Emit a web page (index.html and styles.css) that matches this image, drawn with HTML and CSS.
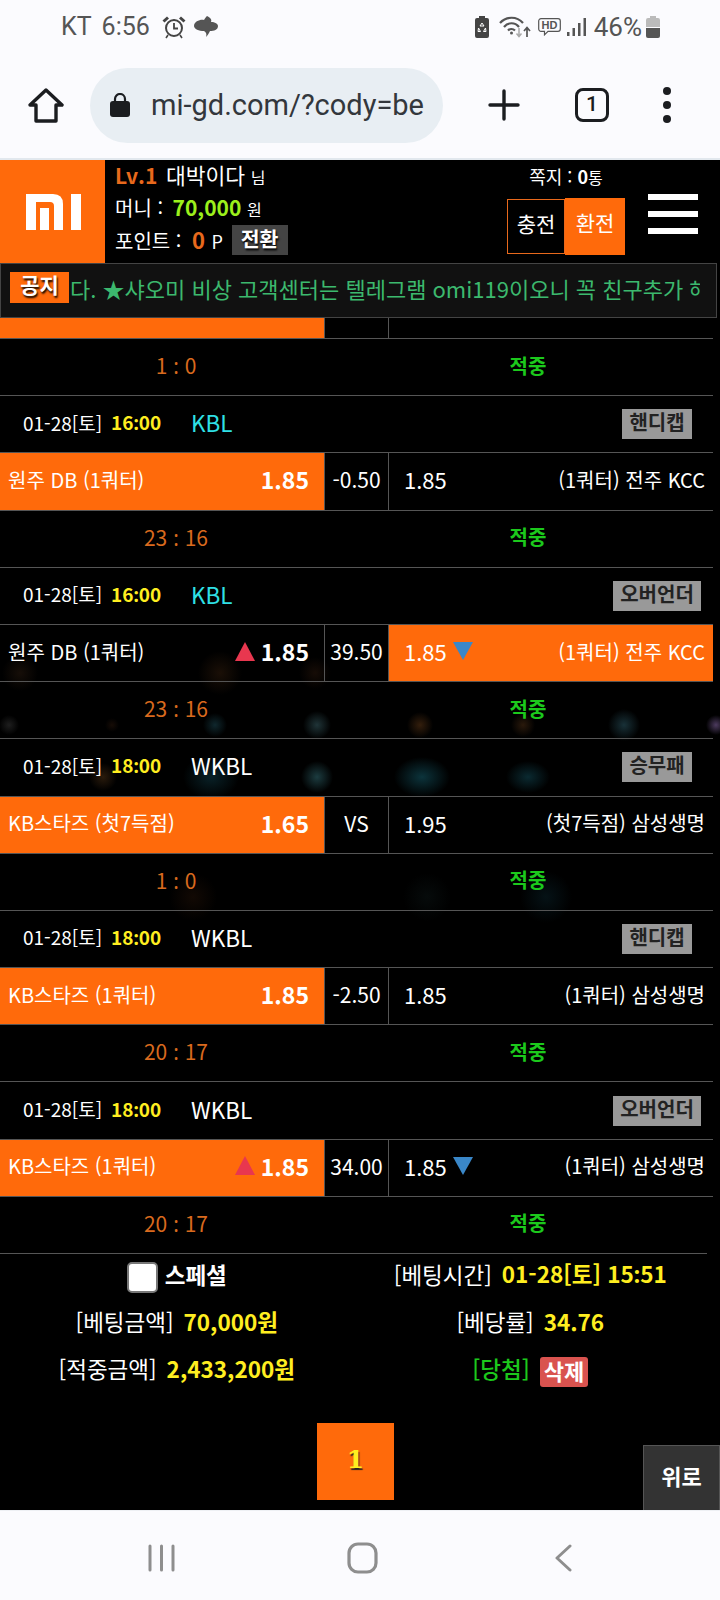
FILE: index.html
```html
<!DOCTYPE html>
<html lang="ko">
<head>
    <meta charset="UTF-8">
    <meta name="viewport" content="width=device-width, initial-scale=1.0">
    <title>mi-gd.com</title>
    <link rel="stylesheet" href="styles.css">
</head>
<body>
    <div class="status">
        <div class="status-left">
            <span class="carrier">KT</span>
            <span class="clock">6:56</span>
            <svg class="ic-alarm" width="24" height="24" viewBox="0 0 24 24" fill="none" stroke="#444" stroke-width="2">
                <circle cx="12" cy="13" r="8"/>
                <path d="M12 8v5.5h4" stroke-width="1.8"/>
                <path d="M1.5 6.5 6 2.5M22.5 6.5 18 2.5" stroke-width="3"/>
                <path d="M6 20l-2 3M18 20l2 3" stroke-width="1.6"/>
            </svg>
            <svg class="ic-blob" width="24" height="21" viewBox="0 0 24 21" fill="#555">
                <path d="M13 0C17 2 18 4 17 6 21 6 24 8 24 10 24 14 20 15 16 15 15 17 14 19 12 21 13 18 12 16 10 15 5 15 0 13 0 10 0 5 7 3 10 4 11 2 12 1 13 0Z"/>
            </svg>
        </div>
        <div class="status-right">
            <svg width="14" height="22" viewBox="0 0 14 22">
                <path d="M4 0h6v2h2a2 2 0 0 1 2 2v16a2 2 0 0 1-2 2H2a2 2 0 0 1-2-2V4a2 2 0 0 1 2-2h2Z" fill="#444"/>
                <path d="M7 7l2 3H5ZM3.500 12l2 3.500H3ZM10.500 12l.5 3.500H8.500Z" fill="none" stroke="#fff" stroke-width="1"/>
            </svg>
            <svg class="ic-wifi" width="32" height="23" viewBox="0 0 32 23" fill="none" stroke="#555" stroke-width="2.200">
                <path d="M1 8C7 1 18 1 24 8M5 12C9 7 16 7 20 12M9 15.500C11 13.500 14 13.500 16 15.500"/>
                <circle cx="12.500" cy="18" r="1.500" fill="#555" stroke="none"/>
                <path d="M20 13v8M17.500 18.500l2.500 3 2.500-3" stroke="#aaa" stroke-width="1.500"/>
                <path d="M28 22v-9M25 16l3-3.500 3 3.500" stroke-width="1.700"/>
            </svg>
            <svg class="ic-hd" width="23" height="18" viewBox="0 0 23 18">
                <path d="M3 .7h17a2.300 2.300 0 0 1 2.300 2.300v8a2.300 2.300 0 0 1-2.300 2.300H10l-3.500 3.500v-3.500H3A2.300 2.300 0 0 1 .7 11V3A2.300 2.300 0 0 1 3 .7Z" fill="none" stroke="#555" stroke-width="1.200"/>
                <text x="11.500" y="11" text-anchor="middle" class="hd-text">HD</text>
            </svg>
            <svg class="ic-signal" width="19" height="18" viewBox="0 0 19 18" fill="#555">
                <rect x="0" y="14" width="2.500" height="4"/>
                <rect x="5.500" y="10" width="2.500" height="8"/>
                <rect x="11" y="5" width="2.500" height="13"/>
                <rect x="16.500" y="0" width="2.500" height="18"/>
            </svg>
            <span class="battery-pct">46%</span>
            <svg class="ic-battery" width="14" height="22" viewBox="0 0 14 22">
                <path d="M4 0h6v2h2a2 2 0 0 1 2 2v7H0V4a2 2 0 0 1 2-2h2Z" fill="#bbb"/>
                <path d="M0 12h14v8a2 2 0 0 1-2 2H2a2 2 0 0 1-2-2Z" fill="#555"/>
            </svg>
        </div>
    </div>

    <div class="browser">
        <svg class="ic-home" width="36" height="35" viewBox="0 0 36 35" fill="none" stroke="#1b1d20" stroke-width="3.400" stroke-linejoin="round">
            <path d="M2 17 18 2l16 15h-6v16H8V17Z"/>
        </svg>
        <div class="address">
            <svg width="20" height="24" viewBox="0 0 20 24" fill="#1b1d20">
                <rect x="0" y="8" width="20" height="16" rx="3"/>
                <path d="M5 9V6a5 5 0 0 1 10 0v3" fill="none" stroke="#1b1d20" stroke-width="2.200"/>
            </svg>
            <span class="url">mi-gd.com/?cody=be</span>
        </div>
        <svg class="ic-plus" width="32" height="32" viewBox="0 0 32 32" stroke="#1b1d20" stroke-width="3.400" stroke-linecap="round">
            <path d="M16 2v28M2 16h28"/>
        </svg>
        <div class="tabs">1</div>
        <div class="dots"><i></i><i></i><i></i></div>
    </div>

    <div class="site">
        <header class="top">
            <div class="logo">
                <svg width="55" height="36" viewBox="0 0 55 36" fill="#fff">
                    <path d="M0 0h27q10 0 10 10v26h-9V12q0-4-4-4H10v28H0Z"/>
                    <path d="M14 14h9v22h-9ZM45 0h10v36H45Z"/>
                </svg>
            </div>
            <div class="user">
                <div><b class="lv">Lv.1</b> <span class="nick">대박이다</span> <small>님</small></div>
                <div>머니 : <b class="money">70,000</b> <small>원</small></div>
                <div>포인트 : <b class="point">0</b> <small class="unit">P</small> <span class="swap">전환</span></div>
            </div>
            <div class="wallet">
                <div class="memo">쪽지 : <b>0</b><small>통</small></div>
                <div class="wallet-btns">
                    <span class="charge">충전</span>
                    <span class="exchange">환전</span>
                </div>
            </div>
            <div class="burger"><i></i><i></i><i></i></div>
        </header>

        <div class="notice">
            <span class="notice-tag">공지</span>
            <div class="ticker">다. ★샤오미 비상 고객센터는 텔레그램 omi119이오니 꼭 친구추가 해</div>
        </div>

        <div class="list">
            <div class="bet bet-cut">
                <div class="side on"></div>
                <div class="mid"></div>
                <div class="side"></div>
            </div>
            <div class="result"><span class="score">1 <i class="colon">:</i> 0</span><span class="hit">적중</span></div>

            <div class="info"><span class="date">01-28[토]</span><span class="time">16<i class="colon">:</i>00</span><span class="league kbl">KBL</span><span class="type-wrap"><span class="type">핸디캡</span></span></div>
            <div class="bet">
                <div class="side on"><span class="team">원주 DB (1쿼터)</span><b class="odd">1.85</b></div>
                <div class="mid">-0.50</div>
                <div class="side"><span class="odd2">1.85</span><span class="team">(1쿼터) 전주 KCC</span></div>
            </div>
            <div class="result"><span class="score">23 <i class="colon">:</i> 16</span><span class="hit">적중</span></div>

            <div class="info"><span class="date">01-28[토]</span><span class="time">16<i class="colon">:</i>00</span><span class="league kbl">KBL</span><span class="type-wrap"><span class="type">오버언더</span></span></div>
            <div class="bet">
                <div class="side"><span class="team">원주 DB (1쿼터)</span><span class="odd-wrap"><i class="up"></i><b class="odd">1.85</b></span></div>
                <div class="mid">39.50</div>
                <div class="side on"><span class="odd-wrap"><span class="odd2">1.85</span><i class="down"></i></span><span class="team">(1쿼터) 전주 KCC</span></div>
            </div>
            <div class="result"><span class="score">23 <i class="colon">:</i> 16</span><span class="hit">적중</span></div>

            <div class="info"><span class="date">01-28[토]</span><span class="time">18<i class="colon">:</i>00</span><span class="league">WKBL</span><span class="type-wrap"><span class="type">승무패</span></span></div>
            <div class="bet">
                <div class="side on"><span class="team">KB스타즈 (첫7득점)</span><b class="odd">1.65</b></div>
                <div class="mid">VS</div>
                <div class="side"><span class="odd2">1.95</span><span class="team">(첫7득점) 삼성생명</span></div>
            </div>
            <div class="result"><span class="score">1 <i class="colon">:</i> 0</span><span class="hit">적중</span></div>

            <div class="info"><span class="date">01-28[토]</span><span class="time">18<i class="colon">:</i>00</span><span class="league">WKBL</span><span class="type-wrap"><span class="type">핸디캡</span></span></div>
            <div class="bet">
                <div class="side on"><span class="team">KB스타즈 (1쿼터)</span><b class="odd">1.85</b></div>
                <div class="mid">-2.50</div>
                <div class="side"><span class="odd2">1.85</span><span class="team">(1쿼터) 삼성생명</span></div>
            </div>
            <div class="result"><span class="score">20 <i class="colon">:</i> 17</span><span class="hit">적중</span></div>

            <div class="info"><span class="date">01-28[토]</span><span class="time">18<i class="colon">:</i>00</span><span class="league">WKBL</span><span class="type-wrap"><span class="type">오버언더</span></span></div>
            <div class="bet">
                <div class="side on"><span class="team">KB스타즈 (1쿼터)</span><span class="odd-wrap"><i class="up"></i><b class="odd">1.85</b></span></div>
                <div class="mid">34.00</div>
                <div class="side"><span class="odd-wrap"><span class="odd2">1.85</span><i class="down"></i></span><span class="team">(1쿼터) 삼성생명</span></div>
            </div>
            <div class="result"><span class="score">20 <i class="colon">:</i> 17</span><span class="hit">적중</span></div>
        </div>

        <div class="summary">
            <div class="cell"><span class="check"></span><b class="special">스페셜</b></div>
            <div class="cell">[베팅시간] <b>01-28[토] 15<i class="colon">:</i>51</b></div>
            <div class="cell">[베팅금액] <b>70,000원</b></div>
            <div class="cell">[베당률] <b>34.76</b></div>
            <div class="cell">[적중금액] <b>2,433,200원</b></div>
            <div class="cell"><span class="won">[당첨]</span><span class="del">삭제</span></div>
        </div>

        <div class="pager"><span class="page-on">1</span></div>
        <div class="go-top">위로</div>
    </div>

    <div class="navbar">
        <svg class="nav-side" width="27" height="28" viewBox="0 0 27 28" stroke="#8e8e8e" stroke-width="3" stroke-linecap="round">
            <path d="M2 2v24M13.500 2v24M25 2v24"/>
        </svg>
        <svg class="nav-home" width="31" height="32" viewBox="0 0 31 32" fill="none" stroke="#8e8e8e" stroke-width="3.200">
            <rect x="2" y="2" width="27" height="28" rx="9"/>
        </svg>
        <svg class="nav-side" width="17" height="28" viewBox="0 0 17 28" fill="none" stroke="#8e8e8e" stroke-width="3" stroke-linecap="round" stroke-linejoin="round">
            <path d="M15 2 2 14l13 12"/>
        </svg>
    </div>
</body>
</html>
```

FILE: styles.css
```css
* { box-sizing: border-box; }
body {
    margin: 0;
    width: 720px;
    height: 1600px;
    overflow: hidden;
    background: #fbfbfe;
    font-family: "Noto Sans CJK KR", "Noto Sans", sans-serif;
    color: #fff;
}
.colon { font-family: "Noto Sans", sans-serif; font-style: normal; }

/* phone status bar */
.status {
    height: 52px;
    padding: 1px 60px 0 61px;
    display: flex;
    justify-content: space-between;
    align-items: center;
    font-family: Roboto, sans-serif;
    font-size: 25px;
    color: #555;
}
.status-left { display: flex; align-items: center; }
.carrier { margin-right: 10px; }
.clock { margin-right: 12px; }
.ic-blob { margin-left: 8px; }
.status-right { display: flex; align-items: center; }
.ic-wifi { margin-left: 10px; }
.ic-hd { margin-left: 7px; }
.ic-signal { margin-left: 6px; }
.battery-pct { margin-left: 8px; margin-right: 4px; font-size: 26px; }
.hd-text { font-family: "Liberation Sans", sans-serif; font-size: 11px; font-weight: 700; fill: #555; }

/* browser toolbar */
.browser {
    height: 108px;
    padding: 0 0 0 28px;
    display: flex;
    align-items: center;
    border-bottom: 2px solid #e2e8ee;
}
.address {
    width: 353px;
    height: 75px;
    margin-left: 26px;
    padding-left: 20px;
    display: flex;
    align-items: center;
    background: #e8eef3;
    border-radius: 38px;
}
.url {
    width: 280px;
    margin-left: 21px;
    white-space: nowrap;
    font-family: Roboto, sans-serif;
    font-size: 29px;
    color: #33373c;
}
.ic-plus { margin-left: 45px; }
.tabs {
    width: 34px;
    height: 34px;
    margin-left: 55px;
    border: 3.4px solid #1b1d20;
    border-radius: 8px;
    font-family: Roboto, sans-serif;
    font-size: 21px;
    font-weight: 500;
    line-height: 27px;
    text-align: center;
    color: #1b1d20;
}
.dots { margin-left: 54px; display: flex; flex-direction: column; gap: 6px; }
.dots i { width: 8px; height: 8px; border-radius: 50%; background: #1b1d20; }

/* site */
.site {
    position: relative;
    height: 1350px;
    overflow: hidden;
    background-color: #000;
    background-image:
        radial-gradient(circle at 317px 617px, rgba(70, 150, 160, .4), transparent 16px),
        radial-gradient(ellipse 28px 20px at 422px 617px, rgba(30, 130, 150, .4), transparent),
        radial-gradient(ellipse 22px 16px at 528px 617px, rgba(30, 120, 140, .35), transparent),
        radial-gradient(ellipse 28px 22px at 211px 617px, rgba(30, 110, 130, .3), transparent),
        radial-gradient(circle at 103px 617px, rgba(140, 90, 40, .3), transparent 14px),
        radial-gradient(circle at 9px 565px, rgba(120, 120, 120, .25), transparent 10px),
        radial-gradient(circle at 112px 565px, rgba(110, 60, 30, .2), transparent 7px),
        radial-gradient(circle at 215px 565px, rgba(50, 130, 150, .3), transparent 12px),
        radial-gradient(circle at 317px 565px, rgba(90, 150, 160, .35), transparent 14px),
        radial-gradient(circle at 420px 565px, rgba(170, 100, 40, .3), transparent 13px),
        radial-gradient(circle at 523px 565px, rgba(150, 90, 40, .28), transparent 12px),
        radial-gradient(circle at 624px 565px, rgba(70, 140, 160, .35), transparent 16px),
        radial-gradient(circle at 716px 565px, rgba(170, 130, 210, .45), transparent 10px),
        radial-gradient(circle at 220px 513px, rgba(120, 70, 30, .22), transparent 22px),
        radial-gradient(circle at 315px 513px, rgba(110, 60, 30, .2), transparent 16px),
        radial-gradient(circle at 20px 513px, rgba(110, 70, 40, .2), transparent 18px),
        radial-gradient(circle at 546px 737px, rgba(25, 90, 110, .2), transparent 26px),
        radial-gradient(circle at 427px 737px, rgba(40, 70, 70, .15), transparent 24px),
        radial-gradient(circle at 193px 737px, rgba(100, 50, 20, .18), transparent 24px);
}
small { font-size: 16px; }

.top { height: 103px; display: flex; background: #000; }
.logo {
    width: 105px;
    padding-left: 2px;
    display: flex;
    align-items: center;
    justify-content: center;
    background: #ff6a0b;
}
.user {
    width: 402px;
    padding: 0 0 0 10px;
    font-size: 20px;
    line-height: 30px;
}
.user > div { white-space: nowrap; }
.user .lv { color: #e8691c; font-size: 21px; margin-right: 3px; }
.nick { font-size: 21.500px; }
.money { color: #9cf01c; font-size: 21px; margin-left: 4px; }
.point { color: #e8691c; font-size: 22px; margin-left: 5px; }
.unit { font-size: 18px; margin-left: 1px; }
.swap {
    display: inline-block;
    width: 56px;
    height: 30px;
    margin: 1px 0 0 3px;
    background: #444;
    font-size: 20.500px;
    font-weight: 700;
    line-height: 27px;
    text-align: center;
    text-shadow: 1px 2px 2px #000;
    vertical-align: top;
}
.wallet { width: 118px; padding-top: 3px; }
.memo { height: 35px; font-size: 18px; line-height: 26px; text-align: center; }
.wallet-btns { display: flex; align-items: center; font-size: 21px; }
.charge {
    width: 58px;
    height: 55px;
    border: 1px solid #e8691c;
    line-height: 47px;
    text-align: center;
}
.exchange {
    width: 60px;
    height: 57px;
    background: #ff6a0b;
    line-height: 49px;
    text-align: center;
}
.burger {
    width: 50px;
    margin: 34px 0 0 23px;
    display: flex;
    flex-direction: column;
    gap: 11px;
}
.burger i { height: 6px; background: #fff; }

.notice {
    width: 717px;
    height: 55px;
    display: flex;
    align-items: center;
    padding-left: 9px;
    background: #111;
    border: 1px solid #444;
}
.notice-tag {
    flex: none;
    width: 59px;
    height: 31px;
    margin-top: -6px;
    background: #ff6a0b;
    font-size: 21px;
    font-weight: 700;
    line-height: 25px;
    text-align: center;
    text-shadow: 1px 2px 2px #000;
}
.ticker {
    width: 630px;
    margin: -6px 0 0 1px;
    overflow: hidden;
    white-space: nowrap;
    font-size: 22px;
    color: #3cb96e;
}

.list { width: 713px; }
.bet, .info, .result { height: 57.2px; border-top: 1px solid #555; }
.bet { display: grid; grid-template-columns: 324px 65px 324px; }
.bet-cut { height: 20px; border-top: 0; }
.side {
    display: flex;
    justify-content: space-between;
    align-items: center;
    padding-bottom: 4px;
    font-size: 20px;
}
.side:first-child { padding-left: 8px; padding-right: 15px; }
.side:last-child { padding-left: 15px; padding-right: 8px; }
.side.on { background: #ff6a0b; }
.odd { font-size: 23px; font-weight: 700; }
.odd2 { font-size: 22px; }
.odd-wrap { display: flex; align-items: center; gap: 6px; }
.mid {
    border-left: 1px solid #555;
    border-right: 1px solid #555;
    display: flex;
    align-items: center;
    justify-content: center;
    padding-bottom: 4px;
    font-size: 21px;
}
.up, .down { width: 0; height: 0; border-left: 10.500px solid transparent; border-right: 10.500px solid transparent; }
.up { border-bottom: 19px solid #e8374f; }
.down { border-top: 18px solid #3a87c8; }

.info { display: flex; align-items: center; padding: 0 0 4px 23px; }
.date { width: 88px; font-size: 19px; }
.time { width: 80px; font-size: 19px; font-weight: 700; color: #ffee20; }
.league { width: 416px; font-size: 22.500px; }
.kbl { color: #2fe0e6; }
.type-wrap { width: 100px; margin-top: 4px; text-align: center; }
.type {
    display: inline-block;
    height: 30px;
    padding: 0 7.500px;
    background: #999;
    font-size: 20px;
    font-weight: 700;
    line-height: 26px;
    color: #222;
}

.result { display: flex; align-items: center; padding: 0 9px 4px 0; }
.result > span { flex: 1; text-align: center; }
.score { font-size: 21px; color: #d96a1e; }
.hit { font-size: 20px; font-weight: 700; color: #1cc91c; }

.summary {
    width: 707px;
    height: 142px;
    display: grid;
    grid-template-columns: 1fr 1fr;
    grid-auto-rows: 47px;
    border-top: 1px solid #555;
    background: #000;
    font-size: 22.500px;
}
.cell { display: flex; align-items: center; justify-content: center; gap: 10px; padding-bottom: 8px; white-space: nowrap; }
.cell b { color: #ffee20; }
.cell .special { color: #fff; margin-left: -3px; }
.check {
    width: 31px;
    height: 31px;
    margin-top: 8px;
    background: #fff;
    border: 2px solid #777;
    border-radius: 5px;
}
.won { color: #1cc91c; font-weight: 500; }
.del {
    height: 30px;
    margin-top: 8px;
    padding: 0 4px;
    background: #d9534f;
    border-radius: 3px;
    font-size: 22px;
    font-weight: 700;
    line-height: 26px;
}

.pager { padding: 28px 9px 0 0; display: flex; justify-content: center; }
.page-on {
    width: 77px;
    height: 77px;
    background: #ff6a0b;
    font-family: "DejaVu Serif", serif;
    font-size: 25px;
    font-weight: 700;
    line-height: 73px;
    text-align: center;
    color: #ffee20;
    text-shadow: 1px 2px 1px #222;
}
.go-top {
    position: absolute;
    right: 0;
    bottom: 0;
    width: 77px;
    height: 65px;
    background: #333;
    border: 1px solid #555;
    border-bottom: 0;
    font-size: 22px;
    font-weight: 700;
    line-height: 58px;
    text-align: center;
}

.navbar {
    height: 90px;
    padding: 31px 148px 0;
    display: flex;
    justify-content: space-between;
    align-items: flex-start;
    border-top: 1px solid #eef0f4;
}
.nav-side { margin-top: 2px; }
.nav-home { margin-left: -6px; }
```
